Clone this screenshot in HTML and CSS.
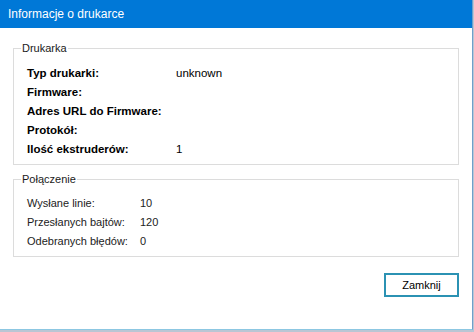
FILE: index.html
```html
<!DOCTYPE html>
<html lang="pl">
<head>
<meta charset="UTF-8">
<title>Informacje o drukarce</title>
<link rel="stylesheet" href="styles.css">
</head>
<body>
	<div class="window">
		<div class="titlebar">Informacje o drukarce</div>
		<div class="content">
			<fieldset class="group">
				<legend>Drukarka</legend>
				<div class="rows printer">
					<div class="row"><span class="label">Typ drukarki:</span><span class="value">unknown</span></div>
					<div class="row"><span class="label">Firmware:</span><span class="value"></span></div>
					<div class="row"><span class="label">Adres URL do Firmware:</span><span class="value"></span></div>
					<div class="row"><span class="label">Protokół:</span><span class="value"></span></div>
					<div class="row"><span class="label">Ilość ekstruderów:</span><span class="value">1</span></div>
				</div>
			</fieldset>
			<fieldset class="group">
				<legend>Połączenie</legend>
				<div class="rows conn">
					<div class="row"><span class="label">Wysłane linie:</span><span class="value">10</span></div>
					<div class="row"><span class="label">Przesłanych bajtów:</span><span class="value">120</span></div>
					<div class="row"><span class="label">Odebranych błędów:</span><span class="value">0</span></div>
				</div>
			</fieldset>
			<div class="btns">
				<button class="btn">Zamknij</button>
			</div>
		</div>
	</div>
</body>
</html>
```
FILE: styles.css
```css
body {
	margin: 0;
	background: #b9c6d4;
	font-family: "Liberation Sans", Arial, sans-serif;
}
.window {
	width: 472px;
	height: 329px;
	background: #fff;
	border-right: 1px solid #6f9fcb;
	border-bottom: 1px solid #8cc7e2;
	display: flex;
	flex-direction: column;
}
.titlebar {
	height: 28px;
	line-height: 28px;
	padding-left: 8px;
	background: #0078d7;
	color: #fff;
	font-size: 12px;
}
.content {
	padding: 12px 13px 0 13px;
}
.group {
	margin: 0 0 6px;
	padding: 0;
	border: 1px solid #dcdcdc;
}
.group legend {
	margin-left: 7px;
	padding: 0 1px;
	font-size: 11px;
	line-height: 16px;
	color: #1a1a1a;
}
.rows {
	padding: 0 0 5px 13px;
	font-size: 11.5px;
	color: #000;
}
.rows.printer {
	padding-top: 8px;
	font-weight: bold;
}
.rows.printer .value {
	font-weight: normal;
}
.rows.conn {
	padding-top: 7px;
	font-size: 11px;
	color: #222;
}
.row {
	display: flex;
	height: 19px;
	line-height: 19px;
}
.printer .label {
	width: 149px;
}
.conn .label {
	width: 113px;
}
.btns {
	display: flex;
	justify-content: flex-end;
	padding-top: 10px;
}
.btn {
	width: 75px;
	height: 24px;
	padding: 0;
	background: #fff;
	border: 2px solid #2b92b3;
	font-family: "Liberation Sans", Arial, sans-serif;
	font-size: 11px;
	color: #000;
}
```
